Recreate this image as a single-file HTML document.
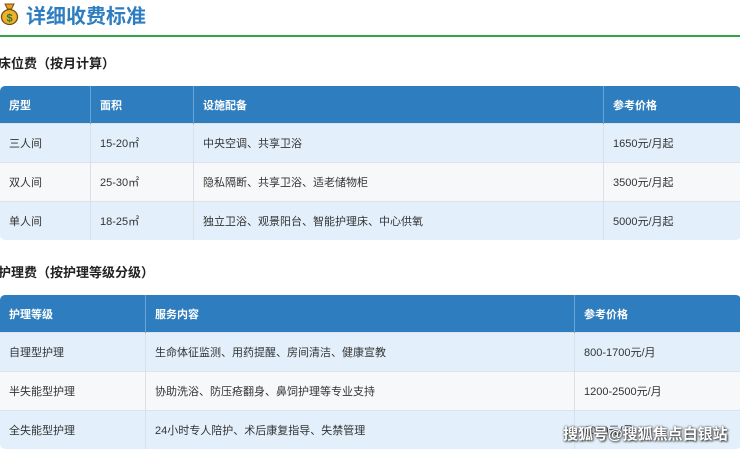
<!DOCTYPE html>
<html><head><meta charset="utf-8"><style>
body{margin:0;width:740px;height:449px;overflow:hidden;background:#fff;font-family:"Liberation Sans","Noto Sans CJK SC",sans-serif;position:relative}
.t{position:absolute;left:26px;top:0px;font-size:20px;font-weight:bold;color:#2d7dc0}
.ic{position:absolute;left:0px;top:3px;width:19px;height:22px}
.ln{position:absolute;left:0;top:35px;width:740px;height:2px;background:#2fa44a}
h3{position:absolute;margin:0;left:-2px;font-size:13px;font-weight:bold;color:#222}
table{position:absolute;left:0;width:741px;border-collapse:collapse;font-size:11px;color:#333;border-radius:5px;overflow:hidden}
th{background:#2e7dbf;color:#fff;text-align:left;font-weight:bold;padding:0 0 0 9px;height:37px;border-right:1px solid #6aa3d6}
td{padding:0 0 0 9px;height:38px;border-top:1px solid #dde3ea;border-right:1px solid #d8e0e8}
tr.a td{background:#e3f0fb}tr.b td{background:#f6f8fa}
.wm{position:absolute;left:563px;top:423px;color:#fff;font-size:15px;font-weight:bold;text-shadow:0 0 2px #333,1px 1px 2px #333}
</style></head><body>
<svg class="ic" viewBox="0 0 19 22"><path d="M5 1h9l-2.5 5h-4z" fill="#e2a027" stroke="#7a4d0a" stroke-width="1"/><ellipse cx="9.5" cy="14" rx="8" ry="7.5" fill="#efb030" stroke="#7a4d0a" stroke-width="1.3"/><text x="9.5" y="18.5" font-size="11" text-anchor="middle" fill="#2a7a2a" font-weight="bold">$</text></svg>
<div class="t">详细收费标准</div>
<div class="ln"></div>
<h3 style="top:53px">床位费（按月计算）</h3>
<table style="top:86px">
<tr><th style="width:81px">房型</th><th style="width:93px">面积</th><th style="width:400px">设施配备</th><th style="border-right:0">参考价格</th></tr>
<tr class="a"><td>三人间</td><td>15-20㎡</td><td>中央空调、共享卫浴</td><td>1650元/月起</td></tr>
<tr class="b"><td>双人间</td><td>25-30㎡</td><td>隐私隔断、共享卫浴、适老储物柜</td><td>3500元/月起</td></tr>
<tr class="a"><td>单人间</td><td>18-25㎡</td><td>独立卫浴、观景阳台、智能护理床、中心供氧</td><td>5000元/月起</td></tr>
</table>
<h3 style="top:262px">护理费（按护理等级分级）</h3>
<table style="top:295px">
<tr><th style="width:136px">护理等级</th><th style="width:419px">服务内容</th><th style="border-right:0">参考价格</th></tr>
<tr class="a"><td>自理型护理</td><td>生命体征监测、用药提醒、房间清洁、健康宣教</td><td>800-1700元/月</td></tr>
<tr class="b"><td>半失能型护理</td><td>协助洗浴、防压疮翻身、鼻饲护理等专业支持</td><td>1200-2500元/月</td></tr>
<tr class="a"><td>全失能型护理</td><td>24小时专人陪护、术后康复指导、失禁管理</td><td>3000元/月</td></tr>
</table>
<div class="wm">搜狐号@搜狐焦点白银站</div>
</body></html>
